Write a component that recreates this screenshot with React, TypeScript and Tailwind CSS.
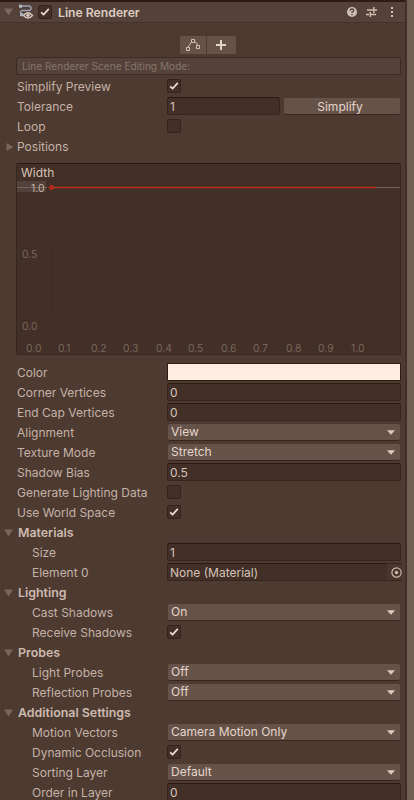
import React from "react";

const Check = ({ on }: { on?: boolean }) => (
  <span className="flex h-[14px] w-[14px] shrink-0 items-center justify-center rounded-[2px] border border-[#33231b] bg-[#422f27]">
    {on && (
      <svg width="10" height="10" viewBox="0 0 10 10" fill="none" stroke="#f3e2d7" strokeWidth="1.6">
        <path d="M1.2 5.3 3.6 7.6 8.8 1.9" />
      </svg>
    )}
  </span>
);

const Fold = ({ open }: { open?: boolean }) => (
  <svg width="9" height="8" viewBox="0 0 9 8" fill="#78675d" className="shrink-0">
    {open ? <path d="M0 .5h9L4.5 7.5z" /> : <path d="M1.5 0v8L8.5 4z" />}
  </svg>
);

const Field = ({ value, className = "w-[234px]" }: { value: string; className?: string }) => (
  <div className={`flex h-[18px] items-center rounded-[2px] border border-[#35251d] border-t-[#281912] bg-[#422f27] pt-[2px] pl-[2px] text-[#d5c3b8] ${className}`}>
    {value}
  </div>
);

const Select = ({ value }: { value: string }) => (
  <div className="mt-px ml-px flex h-[17px] w-[232px] items-center justify-between rounded-[2px] border-b border-[#36261e] bg-[#65534a] pr-[5px] pl-[3px] text-[#e6d5ca]">
    <span>{value}</span>
    <svg width="8" height="5" viewBox="0 0 8 5" fill="#dccbc0">
      <path d="M0 .3h8L4 4.8z" />
    </svg>
  </div>
);

const Row = ({ label, indent, children }: { label: string; indent?: boolean; children?: React.ReactNode }) => (
  <div className="flex h-5 shrink-0 items-start">
    <div className={`w-[167px] shrink-0 leading-[20px] text-[#c4b2a7] ${indent ? "pl-8" : "pl-[17px]"}`}>{label}</div>
    {children}
  </div>
);

const CheckRow = ({ label, indent, on }: { label: string; indent?: boolean; on?: boolean }) => (
  <Row label={label} indent={indent}>
    <div className="pt-[2px]">
      <Check on={on} />
    </div>
  </Row>
);

const Section = ({ label }: { label: string }) => (
  <div className="flex h-5 shrink-0 items-center gap-[5px] pl-1 text-[12.4px] font-semibold text-[#cdbbb0]">
    <Fold open />
    <span>{label}</span>
  </div>
);

const Chart = () => (
  <div className="mt-[6px] ml-4 h-[192px] w-[385px] shrink-0 rounded-[2px] border border-[#35261e] border-t-[#281912] bg-[#422f27]">
    <svg width="383" height="190" viewBox="17 164 383 190" fontFamily="Inter, sans-serif" fontSize="10.3">
      <rect x="17" y="181" width="29" height="11" fill="#52413a" />
      <path d="M17 187.5h30M376 187.5h24" stroke="#74645a" />
      <path d="M51.5 245v70M213.5 244v18" stroke="#3f2c24" />
      <text x="21" y="177" fontSize="12" fill="#d5c3b8">Width</text>
      <text x="31" y="192" fill="#c4b2a7">1.0</text>
      <path d="M52 187.5h324" stroke="#ba2d20" strokeWidth="1.6" />
      <path d="M51.5 184.5l3 3-3 3-3-3z" fill="#c92a1c" />
      <circle cx="51.5" cy="187.5" r=".8" fill="#6b2017" />
      <g fill="#79685d">
        <text x="22" y="258">0.5</text>
        <text x="22" y="330">0.0</text>
        <text x="26" y="352">0.0</text>
        <text x="58" y="352">0.1</text>
        <text x="91" y="352">0.2</text>
        <text x="123" y="352">0.3</text>
        <text x="156" y="352">0.4</text>
        <text x="188" y="352">0.5</text>
        <text x="221" y="352">0.6</text>
        <text x="253" y="352">0.7</text>
        <text x="286" y="352">0.8</text>
        <text x="318" y="352">0.9</text>
        <text x="351" y="352">1.0</text>
      </g>
    </svg>
  </div>
);

const Header = () => (
  <div className="flex h-[23px] shrink-0 items-center border-t-2 border-b border-t-[#2c1c15] border-b-[#43312a] bg-[#54423a] pl-1">
    <Fold open />
    <svg width="16" height="16" viewBox="0 0 16 16" fill="none" className="ml-[5px]">
      <path d="M2.5 2h8q2.5 0 2.5 2.2T10.5 6.5H4.5Q2.5 6.5 2.5 8.500T4.500 11" stroke="#98a3b3" strokeWidth="1.4" />
      <rect x="1" y=".7" width="3" height="3" fill="#b0b8c2" />
      <rect x="2.2" y="9.2" width="3" height="3" fill="#b0b8c2" />
      <path d="M5.500 11.500Q10 6 14.500 11.500 10 16.500 5.500 11.500z" fill="#54423a" stroke="#d8c8bd" strokeWidth="1.3" />
      <circle cx="10" cy="11.3" r="1.7" fill="#d8c8bd" />
    </svg>
    <div className="ml-1">
      <Check on />
    </div>
    <span className="ml-[6px] pt-px text-[12.2px] font-semibold text-[#ddccc1]">Line Renderer</span>
    <div className="ml-auto flex items-center pr-[11px]">
      <svg width="12" height="12" viewBox="0 0 12 12">
        <circle cx="6" cy="6" r="5" fill="#cfbeb3" />
        <path d="M4.200 4.700Q4.200 3 6 3t1.800 1.500Q7.800 5.500 6 6.200v.8M6 8v1.300" stroke="#54423a" strokeWidth="1.3" fill="none" />
      </svg>
      <svg width="12" height="12" viewBox="0 0 12 12" className="ml-2" stroke="#cfbeb3" strokeWidth="1.4" fill="none">
        <path d="M1 4h6M7.800 1v6M7.800 4H11M0 8.500h3M4.300 6v5M4.300 8.500H10" />
      </svg>
      <svg width="4" height="12" viewBox="0 0 4 12" className="ml-3" fill="#cfbeb3">
        <path d="M1 1h2v2H1zM1 5h2v2H1zM1 9h2v2H1z" />
      </svg>
    </div>
  </div>
);

export default function App() {
  return (
    <div className="flex h-[800px] w-[414px] overflow-hidden bg-[#4d3a31] font-['Inter',sans-serif] text-[12px] leading-[16px] whitespace-nowrap">
      <main className="flex w-[405px] shrink-0 flex-col">
        <Header />
        <div className="mt-[13px] ml-[180px] flex h-[18px] w-14 shrink-0 gap-px">
          <div className="flex w-[26px] items-center justify-center rounded-l-[2px] bg-[#65534a]">
            <svg width="16" height="14" viewBox="0 0 16 14" fill="none" stroke="#d2c1b6">
              <path d="M3 9 6.500 4M9.500 3.500Q12 4 12.500 7.500" />
              <path d="M1.500 9.500h3v3h-3zM6.500 1.500h3v3h-3zM11.500 7.500h3v3h-3z" />
            </svg>
          </div>
          <div className="flex w-[29px] items-center justify-center rounded-r-[2px] bg-[#65534a] pr-px">
            <svg width="10" height="10" viewBox="0 0 10 10" stroke="#e3d2c7" strokeWidth="2">
              <path d="M5 0v10M0 5h10" />
            </svg>
          </div>
        </div>
        <div className="mt-[3px] ml-4 flex h-[18px] w-[385px] shrink-0 items-center rounded-[2px] border border-[#3c2b23] bg-[#54423a] pl-[5px] text-[10.15px] text-[#85746a]">
          Line Renderer Scene Editing Mode:
        </div>
        <div className="h-[2px] shrink-0" />
        <CheckRow label="Simplify Preview" on />
        <Row label="Tolerance">
          <Field value="1" className="w-[113px]" />
          <button className="mt-px ml-1 h-[17px] w-[116px] rounded-[2px] border-b border-[#36261e] bg-[#65534a] pr-1 leading-[15px] text-[#e6d5ca]">Simplify</button>
        </Row>
        <CheckRow label="Loop" />
        <div className="flex h-5 shrink-0 items-center gap-[3px] pl-[5px] text-[#c4b2a7]">
          <Fold />
          <span>Positions</span>
        </div>
        <Chart />
        <div className="h-2 shrink-0" />
        <Row label="Color">
          <div className="h-[18px] w-[234px] border border-[#2b1c15] bg-[#ffede2]" />
        </Row>
        <Row label="Corner Vertices"><Field value="0" /></Row>
        <Row label="End Cap Vertices"><Field value="0" /></Row>
        <Row label="Alignment"><Select value="View" /></Row>
        <Row label="Texture Mode"><Select value="Stretch" /></Row>
        <Row label="Shadow Bias"><Field value="0.5" /></Row>
        <CheckRow label="Generate Lighting Data" />
        <CheckRow label="Use World Space" on />
        <Section label="Materials" />
        <Row label="Size" indent><Field value="1" /></Row>
        <Row label="Element 0" indent>
          <Field value="None (Material)" className="w-[220px] rounded-r-none border-r-0" />
          <div className="flex h-[18px] w-[15px] items-center justify-end border-y border-[#35251d] bg-[#49372e]">
            <svg width="11" height="11" viewBox="0 0 11 11">
              <circle cx="5.5" cy="5.5" r="4.6" fill="none" stroke="#cbbaaf" strokeWidth="1.2" />
              <circle cx="5.5" cy="5.5" r="1.7" fill="#cbbaaf" />
            </svg>
          </div>
        </Row>
        <Section label="Lighting" />
        <Row label="Cast Shadows" indent><Select value="On" /></Row>
        <CheckRow label="Receive Shadows" indent on />
        <Section label="Probes" />
        <Row label="Light Probes" indent><Select value="Off" /></Row>
        <Row label="Reflection Probes" indent><Select value="Off" /></Row>
        <Section label="Additional Settings" />
        <Row label="Motion Vectors" indent><Select value="Camera Motion Only" /></Row>
        <CheckRow label="Dynamic Occlusion" indent on />
        <Row label="Sorting Layer" indent><Select value="Default" /></Row>
        <Row label="Order in Layer" indent><Field value="0" /></Row>
      </main>
      <div className="w-[2px] shrink-0 bg-[#422f27]" />
      <div className="w-[7px] shrink-0 bg-[#6f5e54]" />
    </div>
  );
}
